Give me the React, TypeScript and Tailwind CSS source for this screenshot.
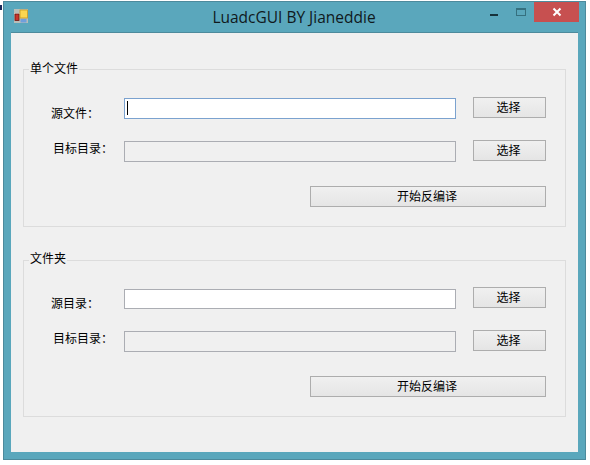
import type { ReactNode } from 'react';

const cjk = "font-['Noto_Sans_CJK_SC','Liberation_Sans',sans-serif]";

function AppIcon() {
  return (
    <svg width="14" height="14" viewBox="0 0 14 14" className="shrink-0">
      <rect x="0" y="0" width="14" height="14" fill="#b9bdb8" />
      <rect x="0" y="4" width="6" height="1" fill="#e4e4de" />
      <rect x="1" y="5" width="4" height="6.5" fill="#c8342c" stroke="#6e1410" strokeWidth="0.8" />
      <rect x="6" y="1" width="7.5" height="8" fill="#fbd650" stroke="#c79a20" strokeWidth="0.8" />
      <rect x="6.5" y="10" width="6" height="3.5" fill="#6f9fdc" />
    </svg>
  );
}

function WinButton({ children, wide = false }: { children: ReactNode; wide?: boolean }) {
  return (
    <button
      type="button"
      className={`${wide ? 'w-[236px]' : 'w-[73px]'} block h-[21px] shrink-0 border border-[#adadad] bg-gradient-to-b from-[#f0f0f0] to-[#e5e5e5] pr-[2px] pb-[2px] text-[12px] leading-[16px] text-black ${cjk}`}
    >
      {children}
    </button>
  );
}

type RowProps = {
  label: string;
  labelClass: string;
  inputClass: string;
  disabled?: boolean;
  focused?: boolean;
};

function Row({ label, labelClass, inputClass, disabled = false, focused = false }: RowProps) {
  const border = focused ? 'border-[#7ba2cf]' : 'border-[#abadb3]';
  return (
    <div className="flex h-[22px] items-start">
      <span className={`w-[100px] shrink-0 text-[12px] leading-[16px] text-black ${cjk} ${labelClass}`}>{label}</span>
      <div className={`relative w-[332px] shrink-0 border ${border} ${disabled ? 'bg-[#f0f0f0]' : 'bg-white'} ${inputClass}`}>
        {focused && <span className="absolute top-[2px] left-[2px] h-[14px] w-px bg-black" />}
      </div>
      <div className="ml-[17px] flex">
        <WinButton>选择</WinButton>
      </div>
    </div>
  );
}

function Group({ title, titleClass, className, children }: { title: string; titleClass: string; className: string; children: ReactNode }) {
  return (
    <div className={`relative mx-[12px] flex flex-col border border-[#dcdcdc] ${className}`}>
      <span className={`absolute left-[5px] bg-[#f0f0f0] px-px text-[12px] leading-[16px] text-black ${cjk} ${titleClass}`}>
        {title}
      </span>
      {children}
    </div>
  );
}

export default function App() {
  return (
    <div className="relative h-[465px] w-[590px] overflow-hidden bg-white pt-px pl-[3px]">
      <span className="absolute top-[5px] left-0 h-[5px] w-[2px] bg-[#1c2a5a]" />
      <div className="flex h-[459px] w-[583px] flex-col border border-[#4d8a9c] bg-[#5aa7bc]">
        <div className="flex h-[30px] shrink-0 items-start">
          <div className="mt-[7px] ml-[10px]">
            <AppIcon />
          </div>
          <div className="mt-[5px] ml-[184px] w-[164px] text-center font-['Open_Sans',sans-serif] text-[15.5px] leading-[20px] whitespace-nowrap text-[#10191c]">
            LuadcGUI BY Jianeddie
          </div>
          <div className="mt-[12px] ml-[114px] h-[2px] w-[8px] bg-[#17323b]" />
          <div className="mt-[6px] ml-[18px] h-[8px] w-[10px] border border-t-2 border-[#35707f]" />
          <div className="ml-[8px] flex h-[20px] w-[45px] items-center justify-center bg-[#c75050]">
            <svg width="10" height="10" viewBox="0 0 10 10">
              <path d="M1.5 1.5 8.5 8.5M8.5 1.5 1.5 8.5" stroke="#fff" strokeWidth="2" />
            </svg>
          </div>
        </div>
        <div className="mx-[7px] h-[420px] w-[567px] border-t border-[#4d8a9c] bg-[#f0f0f0] pt-[36px]">
          <Group title="单个文件" titleClass="top-[-10px]" className="h-[158px] pt-[27px]">
            <Row label="源文件：" labelClass="pt-[8px] pl-[27px]" inputClass="mt-px h-[21px]" focused />
            <div className="mt-[21px]">
              <Row label="目标目录：" labelClass="pl-[29px]" inputClass="mt-px h-[21px]" disabled />
            </div>
            <div className="mt-[24px] mr-[19px] flex justify-end">
              <WinButton wide>开始反编译</WinButton>
            </div>
          </Group>
          <Group title="文件夹" titleClass="top-[-11px]" className="mt-[33px] h-[157px] pt-[26px]">
            <Row label="源目录：" labelClass="pt-[8px] pl-[27px]" inputClass="mt-[2px] h-[20px]" />
            <div className="mt-[21px]">
              <Row label="目标目录：" labelClass="pl-[29px]" inputClass="mt-px h-[21px]" disabled />
            </div>
            <div className="mt-[24px] mr-[19px] flex justify-end">
              <WinButton wide>开始反编译</WinButton>
            </div>
          </Group>
        </div>
      </div>
    </div>
  );
}
